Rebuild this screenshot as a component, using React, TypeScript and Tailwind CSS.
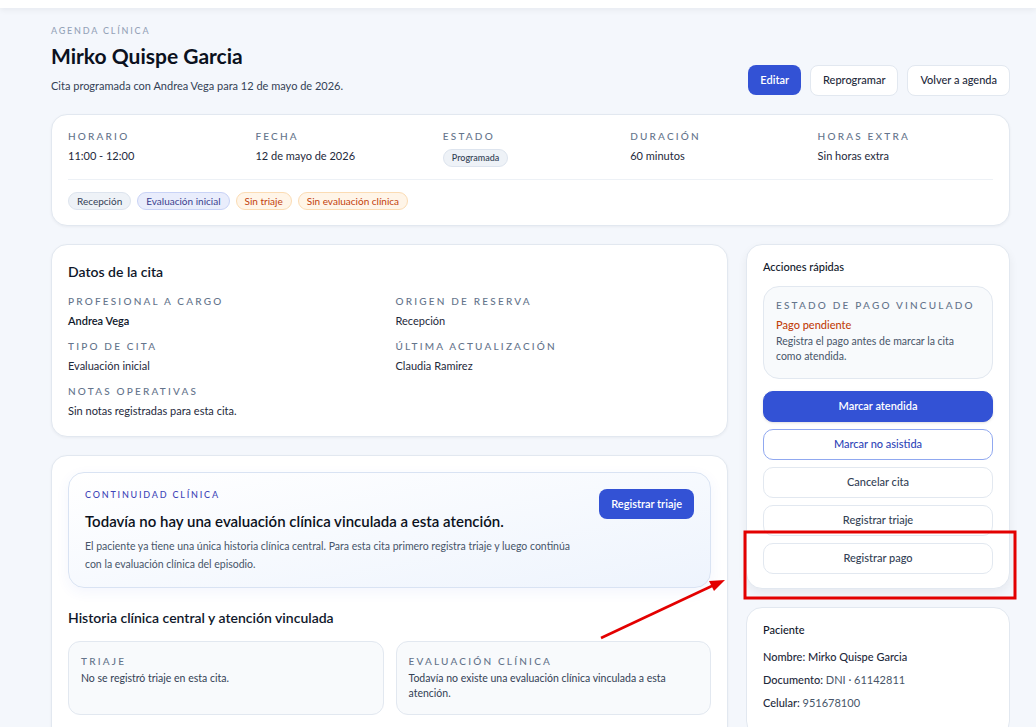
import React from 'react'

const label = 'text-[10px] leading-[13px] font-medium uppercase tracking-[0.22em] text-[#64748b]'

function Field({ title, value, strong }: { title: string; value: React.ReactNode; strong?: boolean }) {
  return (
    <div>
      <div className={label}>{title}</div>
      <div className={`mt-[5px] text-[11px] leading-[15px] ${strong ? 'font-semibold text-[#0f172a]' : 'text-[#1e293b]'}`}>{value}</div>
    </div>
  )
}

function Chip({ children, tone }: { children: React.ReactNode; tone: 'gray' | 'indigo' | 'orange' }) {
  const cls =
    tone === 'gray'
      ? 'bg-[#eef2f7] border-[#dde4ee] text-[#334155]'
      : tone === 'indigo'
        ? 'bg-[#e9edfc] border-[#c9d3f6] text-[#3b3f8f]'
        : 'bg-[#fff5e8] border-[#fbdcb4] text-[#c2410c]'
  return <span className={`inline-flex h-[18px] items-center rounded-full border px-2 text-[10px] ${cls}`}>{children}</span>
}

function ActionButton({ children, variant }: { children: React.ReactNode; variant?: 'primary' | 'outline' }) {
  const cls =
    variant === 'primary'
      ? 'bg-[#3352d5] text-white font-semibold border-[#3352d5] shadow-sm'
      : variant === 'outline'
        ? 'bg-white text-[#2f46b8] border-[#90a8f0] font-medium'
        : 'bg-white text-[#334155] border-[#e2e8f0] font-medium'
  return (
    <button className={`flex h-[31px] w-full items-center justify-center rounded-[10px] border text-[11px] ${cls}`}>
      {children}
    </button>
  )
}

export default function App() {
  return (
    <div
      className="relative h-[727px] overflow-hidden bg-[#f4f7fc] text-[#0f172a]"
      style={{ fontFamily: 'Lato, "Noto Sans", sans-serif' }}
    >
      <div className="h-[8px] bg-white shadow-[0_2px_6px_rgba(15,23,42,0.06)]" />

      <div className="mx-[51px] w-[959px] pt-[17px]">
        {/* header */}
        <div className="flex items-end justify-between">
          <div>
            <div className="text-[9px] leading-[12px] font-medium uppercase tracking-[0.2em] text-[#94a3b8]">Agenda clínica</div>
            <h1 className="mt-[5px] text-[21px] font-bold leading-[28px] text-[#0b1120]">Mirko Quispe Garcia</h1>
            <p className="mt-[9px] text-[11px] leading-[14px] text-[#334155]">Cita programada con Andrea Vega para 12 de mayo de 2026.</p>
          </div>
          <div className="mb-[-3px] flex gap-[9px]">
            <button className="h-[30px] rounded-lg bg-[#3352d5] px-3 text-[11px] font-semibold text-white">Editar</button>
            <button className="h-[31px] rounded-lg border border-[#e2e8f0] bg-white px-3 text-[11px] font-medium text-[#1e293b]">Reprogramar</button>
            <button className="h-[31px] rounded-lg border border-[#e2e8f0] bg-white px-3 text-[11px] font-medium text-[#1e293b]">Volver a agenda</button>
          </div>
        </div>

        {/* summary card */}
        <div className="mt-[21px] rounded-2xl border border-[#e2e8f0] bg-white px-4 pt-[15px] pb-[15px] shadow-[0_1px_3px_rgba(15,23,42,0.05)]">
          <div className="grid grid-cols-5 gap-3 border-b border-[#edf1f6] pb-[12px]">
            <Field title="Horario" value="11:00 - 12:00" />
            <Field title="Fecha" value="12 de mayo de 2026" />
            <div>
              <div className={label}>Estado</div>
              <span className="mt-[3px] inline-flex h-[18px] items-center rounded-full border border-[#dde4ee] bg-[#eef2f7] px-2 text-[9px] font-medium text-[#334155]">
                Programada
              </span>
            </div>
            <Field title="Duración" value="60 minutos" />
            <Field title="Horas extra" value="Sin horas extra" />
          </div>
          <div className="mt-[12px] flex gap-[6px]">
            <Chip tone="gray">Recepción</Chip>
            <Chip tone="indigo">Evaluación inicial</Chip>
            <Chip tone="orange">Sin triaje</Chip>
            <Chip tone="orange">Sin evaluación clínica</Chip>
          </div>
        </div>

        {/* body */}
        <div className="mt-[18px] flex items-start gap-[18px]">
          <div className="flex w-[677px] flex-col gap-[18px]">
            <div className="rounded-2xl border border-[#e2e8f0] bg-white px-4 pt-[18px] pb-[18px] shadow-[0_1px_3px_rgba(15,23,42,0.05)]">
              <h2 className="text-[14px] leading-[18px] font-semibold text-[#0f172a]">Datos de la cita</h2>
              <div className="mt-[14px] grid grid-cols-2 gap-x-3 gap-y-[12px]">
                <Field title="Profesional a cargo" value="Andrea Vega" strong />
                <Field title="Origen de reserva" value="Recepción" />
                <Field title="Tipo de cita" value="Evaluación inicial" />
                <Field title="Última actualización" value="Claudia Ramirez" />
                <Field title="Notas operativas" value="Sin notas registradas para esta cita." />
              </div>
            </div>

            <div className="h-[300px] rounded-2xl border border-[#e2e8f0] bg-white px-4 pt-[16px] shadow-[0_1px_3px_rgba(15,23,42,0.05)]">
              <div className="flex justify-between rounded-2xl border border-[#d9e3f3] bg-gradient-to-br from-white to-[#eef4fd] px-4 pt-[16px] pb-[14px] shadow-[0_4px_14px_rgba(51,82,213,0.06)]">
                <div>
                  <div className="text-[9px] leading-[12px] font-medium uppercase tracking-[0.2em] text-[#3f46b8]">Continuidad clínica</div>
                  <h3 className="mt-[10px] text-[15px] leading-[20px] font-semibold text-[#0b1120]">
                    Todavía no hay una evaluación clínica vinculada a esta atención.
                  </h3>
                  <p className="mt-[6px] max-w-[496px] text-[10.5px] leading-[18px] text-[#475569]">
                    El paciente ya tiene una única historia clínica central. Para esta cita primero registra triaje y luego continúa con la evaluación clínica del episodio.
                  </p>
                </div>
                <button className="h-[30px] shrink-0 rounded-lg bg-[#3352d5] px-3 text-[11px] font-semibold text-white">
                  Registrar triaje
                </button>
              </div>

              <h2 className="mt-[21px] text-[14px] leading-[18px] font-semibold text-[#0f172a]">Historia clínica central y atención vinculada</h2>
              <div className="mt-[14px] grid grid-cols-2 gap-3">
                <div className="h-[74px] rounded-xl border border-[#e2e8f0] bg-[#f8fafc] px-3 pt-[13px]">
                  <div className={label}>Triaje</div>
                  <div className="mt-[3px] text-[10.5px] leading-[15px] text-[#334155]">No se registró triaje en esta cita.</div>
                </div>
                <div className="h-[74px] rounded-xl border border-[#e2e8f0] bg-[#f8fafc] px-3 pt-[13px]">
                  <div className={label}>Evaluación clínica</div>
                  <div className="mt-[3px] max-w-[270px] text-[10.5px] leading-[15px] text-[#334155]">
                    Todavía no existe una evaluación clínica vinculada a esta atención.
                  </div>
                </div>
              </div>
            </div>
          </div>

          <div className="flex w-[264px] flex-col gap-[18px]">
            <div className="rounded-2xl border border-[#e2e8f0] bg-white px-4 pt-[15px] pb-[14px] shadow-[0_4px_10px_rgba(15,23,42,0.06)]">
              <div className="text-[11px] leading-[14px] font-medium text-[#0f172a]">Acciones rápidas</div>
              <div className="mt-[12px] rounded-2xl border border-[#e2e8f0] bg-[#f8fafc] px-3 pt-[12px] pb-[14px]">
                <div className={label}>Estado de pago vinculado</div>
                <div className="mt-[5px] text-[11px] leading-[15px] font-medium text-[#c2410c]">Pago pendiente</div>
                <p className="mt-[2px] text-[10.5px] leading-[15px] text-[#475569]">
                  Registra el pago antes de marcar la cita como atendida.
                </p>
              </div>
              <div className="mt-[12px] flex flex-col gap-[7px]">
                <ActionButton variant="primary">Marcar atendida</ActionButton>
                <ActionButton variant="outline">Marcar no asistida</ActionButton>
                <ActionButton>Cancelar cita</ActionButton>
                <ActionButton>Registrar triaje</ActionButton>
                <ActionButton>Registrar pago</ActionButton>
              </div>
            </div>

            <div className="h-[130px] rounded-2xl border border-[#e2e8f0] bg-white px-4 pt-[15px]">
              <div className="text-[11px] leading-[14px] font-medium text-[#0f172a]">Paciente</div>
              <div className="mt-[13px] flex flex-col gap-[9px] text-[11px] leading-[14px]">
                <div className="font-medium text-[#1e293b]">Nombre: Mirko Quispe Garcia</div>
                <div>
                  <span className="font-medium text-[#1e293b]">Documento:</span>{' '}
                  <span className="text-[#475569]">DNI · 61142811</span>
                </div>
                <div>
                  <span className="font-medium text-[#1e293b]">Celular:</span>{' '}
                  <span className="text-[#475569]">951678100</span>
                </div>
              </div>
            </div>
          </div>
        </div>
      </div>

      {/* annotation overlay */}
      <svg className="pointer-events-none absolute left-0 top-0" width="1036" height="727">
        <rect x="745" y="532" width="270" height="66" fill="none" stroke="#e30000" strokeWidth="3" />
        <line x1="601" y1="638" x2="714" y2="585" stroke="#e30000" strokeWidth="2.5" />
        <polygon points="725,580 709,581 714,591" fill="#e30000" />
      </svg>
    </div>
  )
}
